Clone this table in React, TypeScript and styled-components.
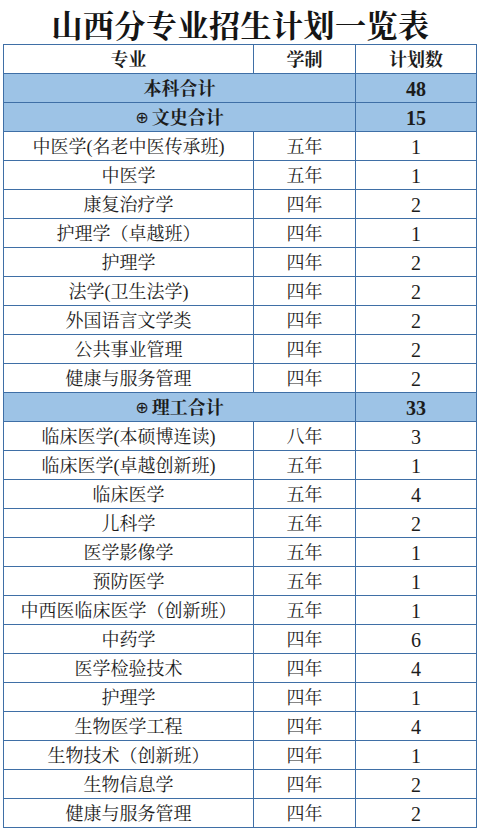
import React from "react";
import styled, { createGlobalStyle } from "styled-components";

const Global = createGlobalStyle`
  html, body { margin: 0; padding: 0; background: #ffffff; }
  body {
    font-family: "Liberation Serif", "Noto Serif CJK SC", "Source Han Serif SC", "Noto Sans CJK SC", serif;
    color: #1c1c1c;
  }
  * { box-sizing: border-box; }
`;

const Page = styled.div`
  width: 481px;
  height: 831px;
  overflow: hidden;
  background: #fff;
`;

const Title = styled.h1`
  margin: 0;
  height: 44px;
  padding-top: 3px;
  display: flex;
  align-items: center;
  justify-content: center;
  font-size: 31px;
  font-weight: 700;
  letter-spacing: 0.5px;
  color: #151515;
  font-family: "Noto Serif CJK SC", "Source Han Serif SC", "Noto Sans CJK SC", serif;
`;

const Table = styled.div`
  margin-left: 3px;
  width: 474px;
  border-left: 1px solid #3f6fa6;
  border-top: 1px solid #3f6fa6;
  display: grid;
  grid-template-columns: 250px 102px 121px;
  grid-auto-rows: 29px;
`;

const Cell = styled.div<{ $span?: number; $sum?: boolean; $bold?: boolean; $num?: boolean }>`
  grid-column: ${(p) => (p.$span ? `span ${p.$span}` : "auto")};
  border-right: 1px solid #3f6fa6;
  border-bottom: 1px solid #3f6fa6;
  background: ${(p) => (p.$sum ? "#9dc3e6" : "#ffffff")};
  display: flex;
  align-items: center;
  justify-content: center;
  font-size: ${(p) => (p.$num ? "20px" : "18px")};
  line-height: 1;
  padding-top: 1px;
  font-weight: ${(p) => (p.$bold || p.$sum ? 700 : 400)};
  white-space: nowrap;
`;

const Circ = styled.span`
  font-size: 16px;
  margin-right: 3px;
  font-family: "DejaVu Sans", sans-serif;
  font-weight: 400;
`;

type Row = [string, string, number] | { sum: string; n: number; mark?: boolean };

const rows: Row[] = [
  { sum: "本科合计", n: 48 },
  { sum: "文史合计", n: 15, mark: true },
  ["中医学(名老中医传承班)", "五年", 1],
  ["中医学", "五年", 1],
  ["康复治疗学", "四年", 2],
  ["护理学（卓越班）", "四年", 1],
  ["护理学", "四年", 2],
  ["法学(卫生法学)", "四年", 2],
  ["外国语言文学类", "四年", 2],
  ["公共事业管理", "四年", 2],
  ["健康与服务管理", "四年", 2],
  { sum: "理工合计", n: 33, mark: true },
  ["临床医学(本硕博连读)", "八年", 3],
  ["临床医学(卓越创新班)", "五年", 1],
  ["临床医学", "五年", 4],
  ["儿科学", "五年", 2],
  ["医学影像学", "五年", 1],
  ["预防医学", "五年", 1],
  ["中西医临床医学（创新班）", "五年", 1],
  ["中药学", "四年", 6],
  ["医学检验技术", "四年", 4],
  ["护理学", "四年", 1],
  ["生物医学工程", "四年", 4],
  ["生物技术（创新班）", "四年", 1],
  ["生物信息学", "四年", 2],
  ["健康与服务管理", "四年", 2],
];

export default function App() {
  return (
    <Page>
      <Global />
      <Title>山西分专业招生计划一览表</Title>
      <Table>
        <Cell $bold>专业</Cell>
        <Cell $bold>学制</Cell>
        <Cell $bold>计划数</Cell>
        {rows.map((r, i) =>
          Array.isArray(r) ? (
            <React.Fragment key={i}>
              <Cell>{r[0]}</Cell>
              <Cell>{r[1]}</Cell>
              <Cell $num>{r[2]}</Cell>
            </React.Fragment>
          ) : (
            <React.Fragment key={i}>
              <Cell $span={2} $sum>
                {r.mark && <Circ>⊕</Circ>}
                {r.sum}
              </Cell>
              <Cell $sum $num>{r.n}</Cell>
            </React.Fragment>
          )
        )}
      </Table>
    </Page>
  );
}
